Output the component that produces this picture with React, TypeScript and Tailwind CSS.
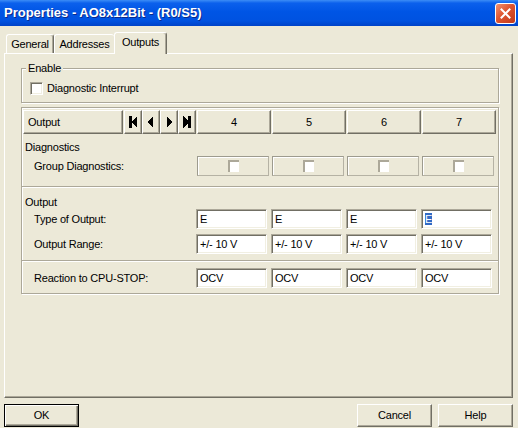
import React from "react";

const raised =
  "border border-t-white border-l-white border-r-[#716F64] border-b-[#716F64] shadow-[inset_-1px_-1px_0_#ACA899] bg-[#ECE9D8]";
const sunken =
  "border border-t-[#ACA899] border-l-[#ACA899] border-r-white border-b-white shadow-[inset_1px_1px_0_#716F64,inset_-1px_-1px_0_#F1EFE2] bg-white";
const etched = "border border-[#ACA899] shadow-[inset_1px_1px_0_#fff,1px_1px_0_#fff]";

function NavButton({ kind }: { kind: "first" | "prev" | "next" | "last" }) {
  return (
    <div className={`${raised} w-[18px] h-[24px] flex items-center justify-center`}>
      <svg width="10" height="12" viewBox="0 0 10 12" shapeRendering="crispEdges">
        {kind === "first" && (
          <>
            <rect x="1" y="0" width="3" height="12" fill="#000" />
            <polygon points="9,0 3,6 9,12" fill="#000" />
          </>
        )}
        {kind === "prev" && <polygon points="7,0 2,6 7,12" fill="#000" />}
        {kind === "next" && <polygon points="3,0 8,6 3,12" fill="#000" />}
        {kind === "last" && (
          <>
            <polygon points="1,0 7,6 1,12" fill="#000" />
            <rect x="6" y="0" width="3" height="12" fill="#000" />
          </>
        )}
      </svg>
    </div>
  );
}

function TextBox({ children }: { children: React.ReactNode }) {
  return (
    <div className="w-[75px]">
      <div className={`${sunken} w-[71px] h-[20px] flex items-center pl-[3px] whitespace-nowrap`}>{children}</div>
    </div>
  );
}

function DiagBox() {
  return (
    <div className="w-[75px] pl-[1px]">
      <div className="w-[72px] h-[20px] border border-t-[#9D9B8E] border-l-[#9D9B8E] border-r-[#B5B2A4] border-b-[#B5B2A4] shadow-[inset_1px_1px_0_#fff] flex items-center justify-center">
        <div className="w-[11px] h-[12px] bg-white border-t-2 border-l-2 border-t-[#ACA899] border-l-[#ACA899]" />
      </div>
    </div>
  );
}

function Separator() {
  return <div className="-ml-[1px] w-[476px] h-[2px] border-t border-t-[#ACA899] border-b border-b-white" />;
}

const cols = ["4", "5", "6", "7"];

export default function App() {
  return (
    <div className="w-[518px] h-[428px] bg-[#ECE9D8] flex flex-col overflow-hidden [font-family:'Liberation_Sans',Arial,sans-serif] text-[11px] leading-[13px] tracking-[-0.2px] text-black">
      {/* Title bar */}
      <div className="h-[26px] shrink-0 flex items-center justify-between pl-[4px] pr-[2px] bg-[linear-gradient(180deg,#3C8DF6_0%,#0B60EC_12%,#0055E5_45%,#0052E0_80%,#0043C8_100%)]">
        <span className="text-white font-bold text-[13px] leading-[16px] tracking-normal [text-shadow:1px_1px_0_#0A2A8C]">
          Properties - AO8x12Bit - (R0/S5)
        </span>
        <div className="w-[21px] h-[21px] rounded-[3px] border border-white bg-[linear-gradient(135deg,#F29272_0%,#DE5530_45%,#C0391A_100%)] flex items-center justify-center">
          <svg width="11" height="11" viewBox="0 0 11 11">
            <path d="M1.5 1.5 L9.5 9.5 M9.5 1.5 L1.5 9.5" stroke="white" strokeWidth="2" strokeLinecap="square" />
          </svg>
        </div>
      </div>

      {/* Tabs */}
      <div className="mt-[6px] ml-[6px] h-[21px] flex items-end shrink-0">
        <div className="w-[48px] h-[19px] rounded-t-[3px] border-t border-l border-r border-t-white border-l-white border-r-[#716F64] shadow-[inset_-1px_0_0_#ACA899] flex items-center justify-center">
          General
        </div>
        <div className="w-[60px] h-[19px] rounded-t-[3px] border-t border-l border-t-white border-l-white flex items-center justify-center">
          Addresses
        </div>
        <div className="relative z-10 -mb-[1px] w-[53px] h-[22px] rounded-t-[3px] bg-[#ECE9D8] border-t border-l border-r border-t-white border-l-white border-r-[#716F64] shadow-[inset_-1px_0_0_#ACA899] flex items-start justify-center pt-[3px]">
          Outputs
        </div>
      </div>

      {/* Tab panel */}
      <div className="ml-[4px] w-[509px] h-[345px] shrink-0 border border-t-white border-l-white border-r-[#716F64] border-b-[#716F64] shadow-[inset_-1px_-1px_0_#ACA899] flex flex-col pl-[16px] pt-[14px]">
        {/* Enable group */}
        <div className={`${etched} relative w-[478px] h-[35px] pl-[8px] pt-[13px]`}>
          <span className="absolute left-[4px] -top-[7px] px-[2px] bg-[#ECE9D8]">Enable</span>
          <div className="flex items-center gap-[4px]">
            <div className={`${sunken} w-[13px] h-[13px]`} />
            <span>Diagnostic Interrupt</span>
          </div>
        </div>

        {/* Main grid group */}
        <div className={`${etched} mt-[4px] w-[478px] h-[187px] pl-[1px] pt-[2px] flex flex-col`}>
          {/* header */}
          <div className="flex h-[24px]">
            <div className={`${raised} w-[100px] h-[24px] flex items-center pl-[4px]`}>Output</div>
            <div className="ml-[1px] flex">
              <NavButton kind="first" />
              <NavButton kind="prev" />
              <NavButton kind="next" />
              <NavButton kind="last" />
            </div>
            <div className="flex pl-[1px]">
              {cols.map((c) => (
                <div key={c} className="w-[75px]">
                  <div className={`${raised} w-[74px] h-[24px] flex items-center justify-center`}>{c}</div>
                </div>
              ))}
            </div>
          </div>

          <div className="mt-[7px] pl-[2px] h-[13px]">Diagnostics</div>
          <div className="mt-[2px] h-[20px] flex items-center">
            <div className="w-[173px] pl-[11px]">Group Diagnostics:</div>
            {cols.map((c) => (
              <DiagBox key={c} />
            ))}
          </div>

          <div className="mt-[10px]">
            <Separator />
          </div>

          <div className="mt-[8px] pl-[2px] h-[13px]">Output</div>
          <div className="h-[20px] flex items-center">
            <div className="w-[173px] pl-[11px]">Type of Output:</div>
            <TextBox>E</TextBox>
            <TextBox>E</TextBox>
            <TextBox>E</TextBox>
            <TextBox>
              <span className="bg-[#316AC5] text-white leading-[12px]">E</span>
            </TextBox>
          </div>
          <div className="mt-[5px] h-[20px] flex items-center">
            <div className="w-[173px] pl-[11px]">Output Range:</div>
            {cols.map((c) => (
              <TextBox key={c}>+/- 10 V</TextBox>
            ))}
          </div>

          <div className="mt-[6px]">
            <Separator />
          </div>

          <div className="mt-[6px] h-[20px] flex items-center">
            <div className="w-[173px] pl-[11px]">Reaction to CPU-STOP:</div>
            {cols.map((c) => (
              <TextBox key={c}>OCV</TextBox>
            ))}
          </div>
        </div>
      </div>

      {/* Bottom buttons */}
      <div className="mt-[6px] h-[23px] flex pl-[4px] pr-[5px] shrink-0">
        <div className="w-[75px] h-[23px] border border-black bg-[#ECE9D8] shadow-[inset_1px_1px_0_#fff,inset_-1px_-1px_0_#716F64,inset_-2px_-2px_0_#ACA899] flex items-center justify-center">
          OK
        </div>
        <div className={`${raised} ml-auto w-[75px] h-[23px] flex items-center justify-center`}>Cancel</div>
        <div className={`${raised} ml-[6px] w-[75px] h-[23px] flex items-center justify-center`}>Help</div>
      </div>
    </div>
  );
}
